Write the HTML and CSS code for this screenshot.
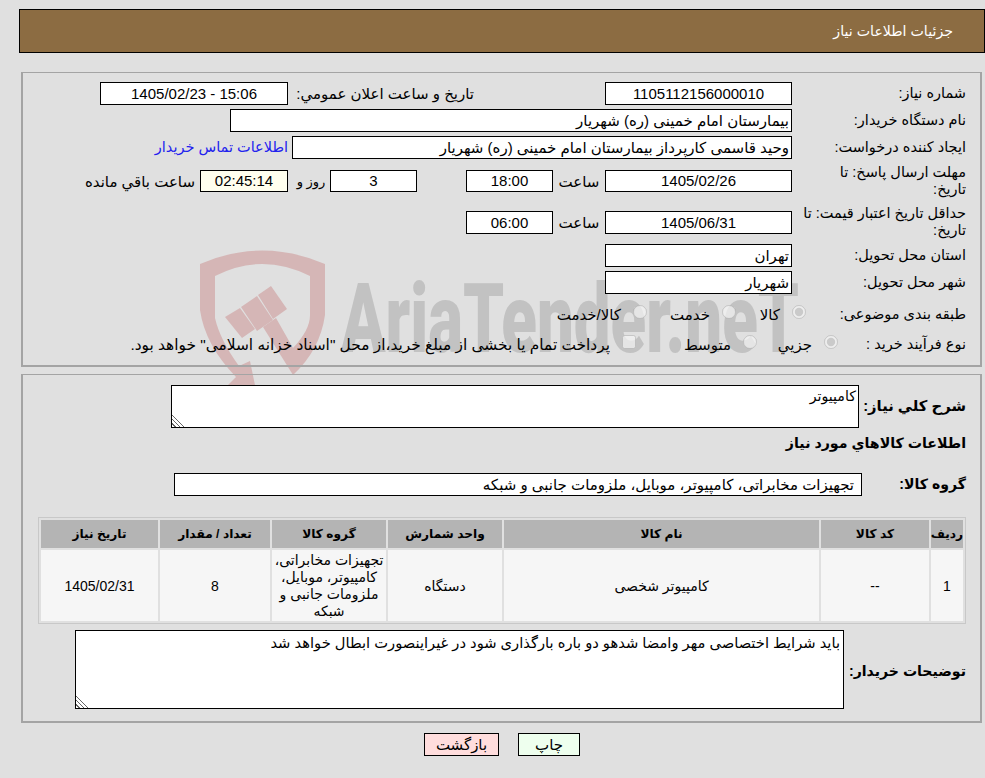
FILE: index.html
```html
<!DOCTYPE html>
<html lang="fa" dir="rtl">
<head>
<meta charset="utf-8">
<title>جزئیات اطلاعات نیاز</title>
<link rel="stylesheet" href="styles.css">
</head>
<body>
<svg class="watermark" width="640" height="150" viewBox="190 240 640 150" aria-hidden="true">
  <g fill="#d5b6b6">
    <path d="M200 264Q262 237 325 264L325 315Q320 350 293 375L263 327L276 318L293 348Q310 330 310 315L310 276Q262 252 215 276L215 318Q220 340 239 366L250 361L256 390L228 385L236 377Q205 345 200 310Z"/>
    <path d="M225 317L240 308L255 329L242 338Z"/>
    <path d="M241 307L257 296L273 320L257 331Z"/>
    <path d="M258 295L271 286L287 309L273 319Z"/>
  </g>
  <text class="wm-text" x="341" y="352" dir="ltr" textLength="458" lengthAdjust="spacingAndGlyphs">AriaTender.neT</text>
</svg>

<header class="title-bar">جزئیات اطلاعات نیاز</header>

<section class="panel panel-top">
  <div class="row">
    <div class="lbl">شماره نیاز:</div>
    <div class="box w187 center">1105112156000010</div>
    <div class="cell-public">تاریخ و ساعت اعلان عمومي:</div>
    <div class="box w188 center">15:06 - 1405/02/23</div>
  </div>
  <div class="row">
    <div class="lbl">نام دستگاه خریدار:</div>
    <div class="box w562">بیمارستان امام خمینی (ره) شهریار</div>
  </div>
  <div class="row">
    <div class="lbl">ایجاد کننده درخواست:</div>
    <div class="box w500">وحید قاسمی کارپرداز بیمارستان امام خمینی (ره) شهریار</div>
    <a class="contact" href="#">اطلاعات تماس خریدار</a>
  </div>
  <div class="row tall first-tall">
    <div class="lbl">مهلت ارسال پاسخ: تا<br>تاریخ:</div>
    <div class="box w187 h22 center">1405/02/26</div>
    <div class="cell-time">ساعت</div>
    <div class="box w87 h22 center">18:00</div>
    <div class="spacer49"></div>
    <div class="box w87 h22 center">3</div>
    <div class="cell-day">روز و</div>
    <div class="box w88 h22 center countdown">02:45:14</div>
    <div class="remain">ساعت باقي مانده</div>
  </div>
  <div class="row tall second-tall">
    <div class="lbl">حداقل تاریخ اعتبار قیمت: تا<br>تاریخ:</div>
    <div class="box w187 center">1405/06/31</div>
    <div class="cell-time">ساعت</div>
    <div class="box w87 center">06:00</div>
  </div>
  <div class="row">
    <div class="lbl">استان محل تحویل:</div>
    <div class="box w187">تهران</div>
  </div>
  <div class="row">
    <div class="lbl">شهر محل تحویل:</div>
    <div class="box w187">شهریار</div>
  </div>
  <div class="row options-a">
    <div class="lbl-short">طبقه بندی موضوعی:</div>
    <label class="opt w70"><input type="radio" name="cat" disabled checked>کالا</label>
    <label class="opt w89"><input type="radio" name="cat" disabled>خدمت</label>
    <label class="opt"><input type="radio" name="cat" disabled>کالا/خدمت</label>
  </div>
  <div class="row options-b">
    <div class="lbl-process">نوع فرآیند خرید :</div>
    <label class="opt w81"><input type="radio" name="proc" disabled checked>جزيي</label>
    <label class="opt w121"><input type="radio" name="proc" disabled>متوسط</label>
    <label class="opt opt-long"><input type="checkbox" disabled>پرداخت تمام یا بخشی از مبلغ خرید،از محل "اسناد خزانه اسلامی" خواهد بود.</label>
  </div>
</section>

<section class="panel panel-bottom">
  <div class="need-row">
    <div class="strong-lbl">شرح کلي نياز:</div>
    <textarea class="area need-area" readonly>کامپیوتر</textarea>
  </div>
  <h2 class="section-title">اطلاعات کالاهاي مورد نياز</h2>
  <div class="group-row">
    <div class="strong-lbl">گروه کالا:</div>
    <div class="box group-box">تجهیزات مخابراتی، کامپیوتر، موبایل، ملزومات جانبی و شبکه</div>
  </div>
  <table class="items">
    <colgroup>
      <col class="c1"><col class="c2"><col class="c3"><col class="c4"><col class="c5"><col class="c6"><col class="c7">
    </colgroup>
    <thead>
      <tr><th>ردیف</th><th>کد کالا</th><th>نام کالا</th><th>واحد شمارش</th><th>گروه کالا</th><th>تعداد / مقدار</th><th>تاریخ نیاز</th></tr>
    </thead>
    <tbody>
      <tr><td>1</td><td>--</td><td>کامپیوتر شخصی</td><td>دستگاه</td><td>تجهیزات مخابراتی، کامپیوتر، موبایل، ملزومات جانبی و شبکه</td><td>8</td><td>1405/02/31</td></tr>
    </tbody>
  </table>
  <div class="buyer-row">
    <div class="strong-lbl buyer-lbl">توضیحات خریدار:</div>
    <textarea class="area buyer-area" readonly>باید شرایط اختصاصی مهر وامضا شدهو دو باره بارگذاری شود در غیراینصورت ابطال خواهد شد</textarea>
  </div>
</section>

<div class="actions">
  <button class="btn print" type="button">چاپ</button>
  <button class="btn back" type="button">بازگشت</button>
</div>
</body>
</html>
```

FILE: styles.css
```css
html { background: #e0e0e0; }
body {
  margin: 0;
  height: 778px;
  overflow: hidden;
  color: #000;
  font: 15px/17px "Liberation Sans", "DejaVu Sans", sans-serif;
}
.watermark { position: absolute; left: 190px; top: 240px; z-index: -1; }
.wm-text { font: 900 97px Roboto, sans-serif; fill: #c2c2c2; direction: ltr; }

.title-bar {
  box-sizing: border-box;
  width: 966px;
  height: 44px;
  margin-top: 9px;
  padding: 0 31px;
  background: #8c6c42;
  border: 1px solid #000;
  color: #fff;
  font-size: 14.2px;
  line-height: 43px;
}
.panel {
  box-sizing: border-box;
  width: 961px;
  margin-right: 3px;
  padding: 0 14px;
  border: 1px solid #a4a4a4;
  border-width: 1px 2px 2px 2px;
}
.panel-top { height: 295px; margin-top: 19px; padding-top: 9px; }
.panel-bottom { height: 349px; margin-top: 7px; padding-top: 10px; }

.row { display: flex; align-items: center; height: 23px; margin-bottom: 4px; }
.row.tall { height: 34px; }
.first-tall { margin-top: 5px; }
.row.first-tall { margin-bottom: 7px; }
.row.second-tall { margin-bottom: 5px; }
.options-a { margin-top: 9px; }
.row.options-a { margin-bottom: 7px; }

.lbl { box-sizing: border-box; flex: none; width: 174px; padding-left: 4px; font-size: 14.5px; }
.lbl-short { flex: none; width: 160px; font-size: 14.5px; }
.lbl-process { flex: none; width: 128px; font-size: 14.5px; }

.box {
  box-sizing: border-box;
  flex: none;
  height: 23px;
  padding: 0 2px;
  background: #fff;
  border: 1px solid #000;
  line-height: 21px;
  white-space: nowrap;
  overflow: hidden;
}
.center { text-align: center; }
.h22 { height: 22px; line-height: 20px; }
.w87 { width: 87px; }
.w88 { width: 88px; }
.w187 { width: 187px; }
.w188 { width: 188px; }
.w500 { width: 500px; }
.w562 { width: 562px; }
.countdown { background: #ffffee; }
.cell-public { box-sizing: border-box; flex: none; width: 317px; padding-right: 131px; }
.cell-time { flex: none; width: 52px; text-align: center; }
.cell-day { box-sizing: border-box; flex: none; width: 42px; padding-left: 4px; font-size: 13px; text-align: center; }
.spacer49 { flex: none; width: 49px; }
.remain { margin-right: 5px; white-space: nowrap; }
.contact { margin-right: 4px; color: #2222ee; font-size: 14.5px; text-decoration: none; white-space: nowrap; }

.opt { display: flex; flex: none; align-items: center; gap: 12px; white-space: nowrap; }
.opt input { flex: none; width: 14px; height: 14px; margin: 0 0 6px; }
.opt-long { font-size: 15.4px; }
.w70 { width: 70px; }
.w81 { width: 81px; }
.w89 { width: 89px; }
.w121 { width: 121px; }

.strong-lbl { flex: none; font-size: 14.1px; font-weight: 700; }
.need-row { display: flex; align-items: center; }
.need-row .strong-lbl { width: 107px; font-size: 14.8px; }
.area {
  display: block;
  box-sizing: border-box;
  flex: none;
  margin: 0;
  padding: 2px;
  background: #fff;
  border: 1px solid #000;
  border-radius: 0;
  color: #000;
  font: 14.7px/17px "Liberation Sans", "DejaVu Sans", sans-serif;
  resize: both;
  outline: none;
}
.area::-webkit-resizer {
  background: linear-gradient(45deg, transparent 2px, #666 2px 3px, transparent 3px 5px, #666 5px 6px, transparent 6px 8px, #666 8px 9px, transparent 9px);
}
.need-area { width: 688px; height: 43px; font-size: 14.2px; }
.section-title { margin: 6px 0 0; font-size: 14.2px; line-height: 18px; font-weight: 700; }
.group-row { display: flex; align-items: center; margin-top: 21px; }
.group-row .strong-lbl { width: 104px; }
.group-box { width: 688px; padding: 0 7px; }

.items {
  width: 928px;
  margin: 21px 0 0 0;
  table-layout: fixed;
  border: 1px solid #c8c8c8;
  border-spacing: 2px;
  border-collapse: separate;
  font-size: 14px;
}
.items th, .items td { padding: 0; text-align: center; vertical-align: middle; }
.items th { height: 28px; background: #b4b4b4; font-size: 12.2px; font-weight: 700; }
.items td { box-sizing: border-box; height: 71px; padding-top: 1px; background: #f6f6f6; }
.c1 { width: 32px; } .c2 { width: 108px; } .c3 { width: 315px; } .c4 { width: 114px; }
.c5 { width: 114px; } .c6 { width: 110px; } .c7 { width: 117px; }

.buyer-row { display: flex; align-items: center; margin-top: 6px; }
.buyer-lbl { box-sizing: border-box; width: 122px; padding-top: 4px; }
.buyer-area { width: 769px; height: 79px; padding: 4px 3px; }

.actions { display: flex; gap: 19px; margin-top: 10px; margin-right: 405px; }
.btn {
  box-sizing: border-box;
  height: 23px;
  padding: 0;
  border: 1px solid #000;
  border-radius: 0;
  color: #000;
  font: 15px/17px "Liberation Sans", "DejaVu Sans", sans-serif;
}
.print { width: 62px; background: #eeffee; }
.back { width: 75px; background: #ffdddd; }
```
